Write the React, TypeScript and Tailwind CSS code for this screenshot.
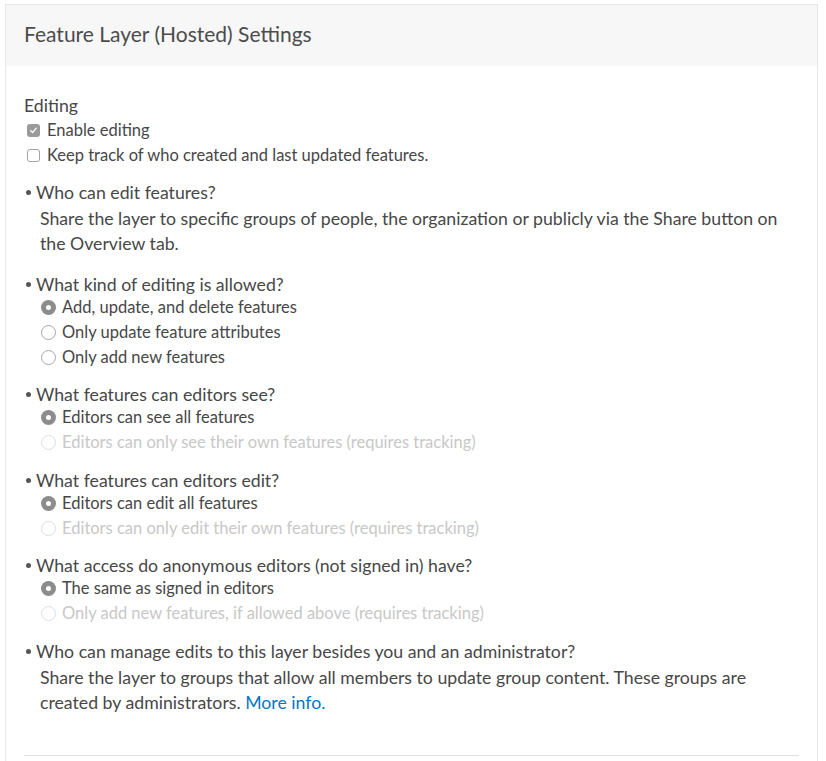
import React from "react";

type Option = { label: string; checked?: boolean; disabled?: boolean };
type Question = { title: string; text?: React.ReactNode; options?: Option[] };

const questions: Question[] = [
  {
    title: "Who can edit features?",
    text: (
      <>
        Share the layer to specific groups of people, the organization or publicly via the Share button on the Overview tab.
      </>
    ),
  },
  {
    title: "What kind of editing is allowed?",
    options: [
      { label: "Add, update, and delete features", checked: true },
      { label: "Only update feature attributes" },
      { label: "Only add new features" },
    ],
  },
  {
    title: "What features can editors see?",
    options: [
      { label: "Editors can see all features", checked: true },
      { label: "Editors can only see their own features (requires tracking)", disabled: true },
    ],
  },
  {
    title: "What features can editors edit?",
    options: [
      { label: "Editors can edit all features", checked: true },
      { label: "Editors can only edit their own features (requires tracking)", disabled: true },
    ],
  },
  {
    title: "What access do anonymous editors (not signed in) have?",
    options: [
      { label: "The same as signed in editors", checked: true },
      { label: "Only add new features, if allowed above (requires tracking)", disabled: true },
    ],
  },
  {
    title: "Who can manage edits to this layer besides you and an administrator?",
    text: (
      <>
        Share the layer to groups that allow all members to update group content. These groups are created by administrators.{" "}
        <a className="text-[#0079c1]" href="#">
          More info.
        </a>
      </>
    ),
  },
];

function Checkbox({ checked }: { checked?: boolean }) {
  return (
    <span
      className={
        checked
          ? "flex h-[13px] w-[13px] shrink-0 items-center justify-center rounded-[3px] bg-[#9a9a9a]"
          : "h-[13px] w-[13px] shrink-0 rounded-[3px] border border-[#a5a5a5] bg-white"
      }
    >
      {checked && (
        <svg width="9" height="9" viewBox="0 0 9 9" fill="none">
          <path d="M1.8 4.8 L3.6 6.6 L7.2 2.2" stroke="#fff" strokeWidth="1.3" strokeLinecap="round" strokeLinejoin="round" />
        </svg>
      )}
    </span>
  );
}

function Radio({ checked, disabled }: { checked?: boolean; disabled?: boolean }) {
  if (checked) {
    return (
      <span className="flex h-[15px] w-[15px] shrink-0 items-center justify-center rounded-full bg-[#8c8c8c]">
        <span className="h-[5px] w-[5px] rounded-full bg-white" />
      </span>
    );
  }
  return (
    <span
      className={
        disabled
          ? "h-[15px] w-[15px] shrink-0 rounded-full border border-[#dedede] bg-white"
          : "h-[15px] w-[15px] shrink-0 rounded-full border border-[#a8a8a8] bg-white"
      }
    />
  );
}

export default function App() {
  return (
    <div className="h-[761px] w-[826px] overflow-hidden bg-white pl-[5px] pr-[8px] pt-[4px] font-['Lato',sans-serif] text-[16.5px] text-[#474747]">
      <div className="h-full border border-b-0 border-[#e6e6e6]">
        <div className="flex h-[61px] items-center bg-[#f7f7f7] px-[18px] pb-[3px] text-[21px] text-[#4c4c4c]">
          Feature Layer (Hosted) Settings
        </div>

        <div className="px-[18px] pt-[27px]">
          <div className="text-[17.7px] leading-[25px]">Editing</div>
          <label className="flex h-[25px] items-center gap-[7px] pl-[3px]">
            <Checkbox checked />
            <span>Enable editing</span>
          </label>
          <label className="flex h-[25px] items-center gap-[7px] pl-[3px]">
            <Checkbox />
            <span>Keep track of who created and last updated features.</span>
          </label>

          <div className="mt-[12px] flex flex-col gap-[12.5px]">
            {questions.map((q) => (
              <div key={q.title}>
                <div className="flex items-center text-[17.7px] leading-[25px]">
                  <span className="ml-[2px] mr-[5px] h-[5px] w-[5px] rounded-full bg-[#555555]" />
                  <span>{q.title}</span>
                </div>
                {q.text && <p className="pb-[3px] pl-[16px] pt-[1px] text-[17.7px] leading-[25px]">{q.text}</p>}
                {q.options && (
                  <div className="-mt-[2px]">
                    {q.options.map((o) => (
                      <label
                        key={o.label}
                        className={
                          o.disabled
                            ? "flex h-[25px] items-center gap-[6px] pl-[17px] text-[#c8c8c8]"
                            : "flex h-[25px] items-center gap-[6px] pl-[17px]"
                        }
                      >
                        <Radio checked={o.checked} disabled={o.disabled} />
                        <span>{o.label}</span>
                      </label>
                    ))}
                  </div>
                )}
              </div>
            ))}
          </div>

          <div className="mt-[37px] border-t border-[#e0e0e0]" />
        </div>
      </div>
    </div>
  );
}
